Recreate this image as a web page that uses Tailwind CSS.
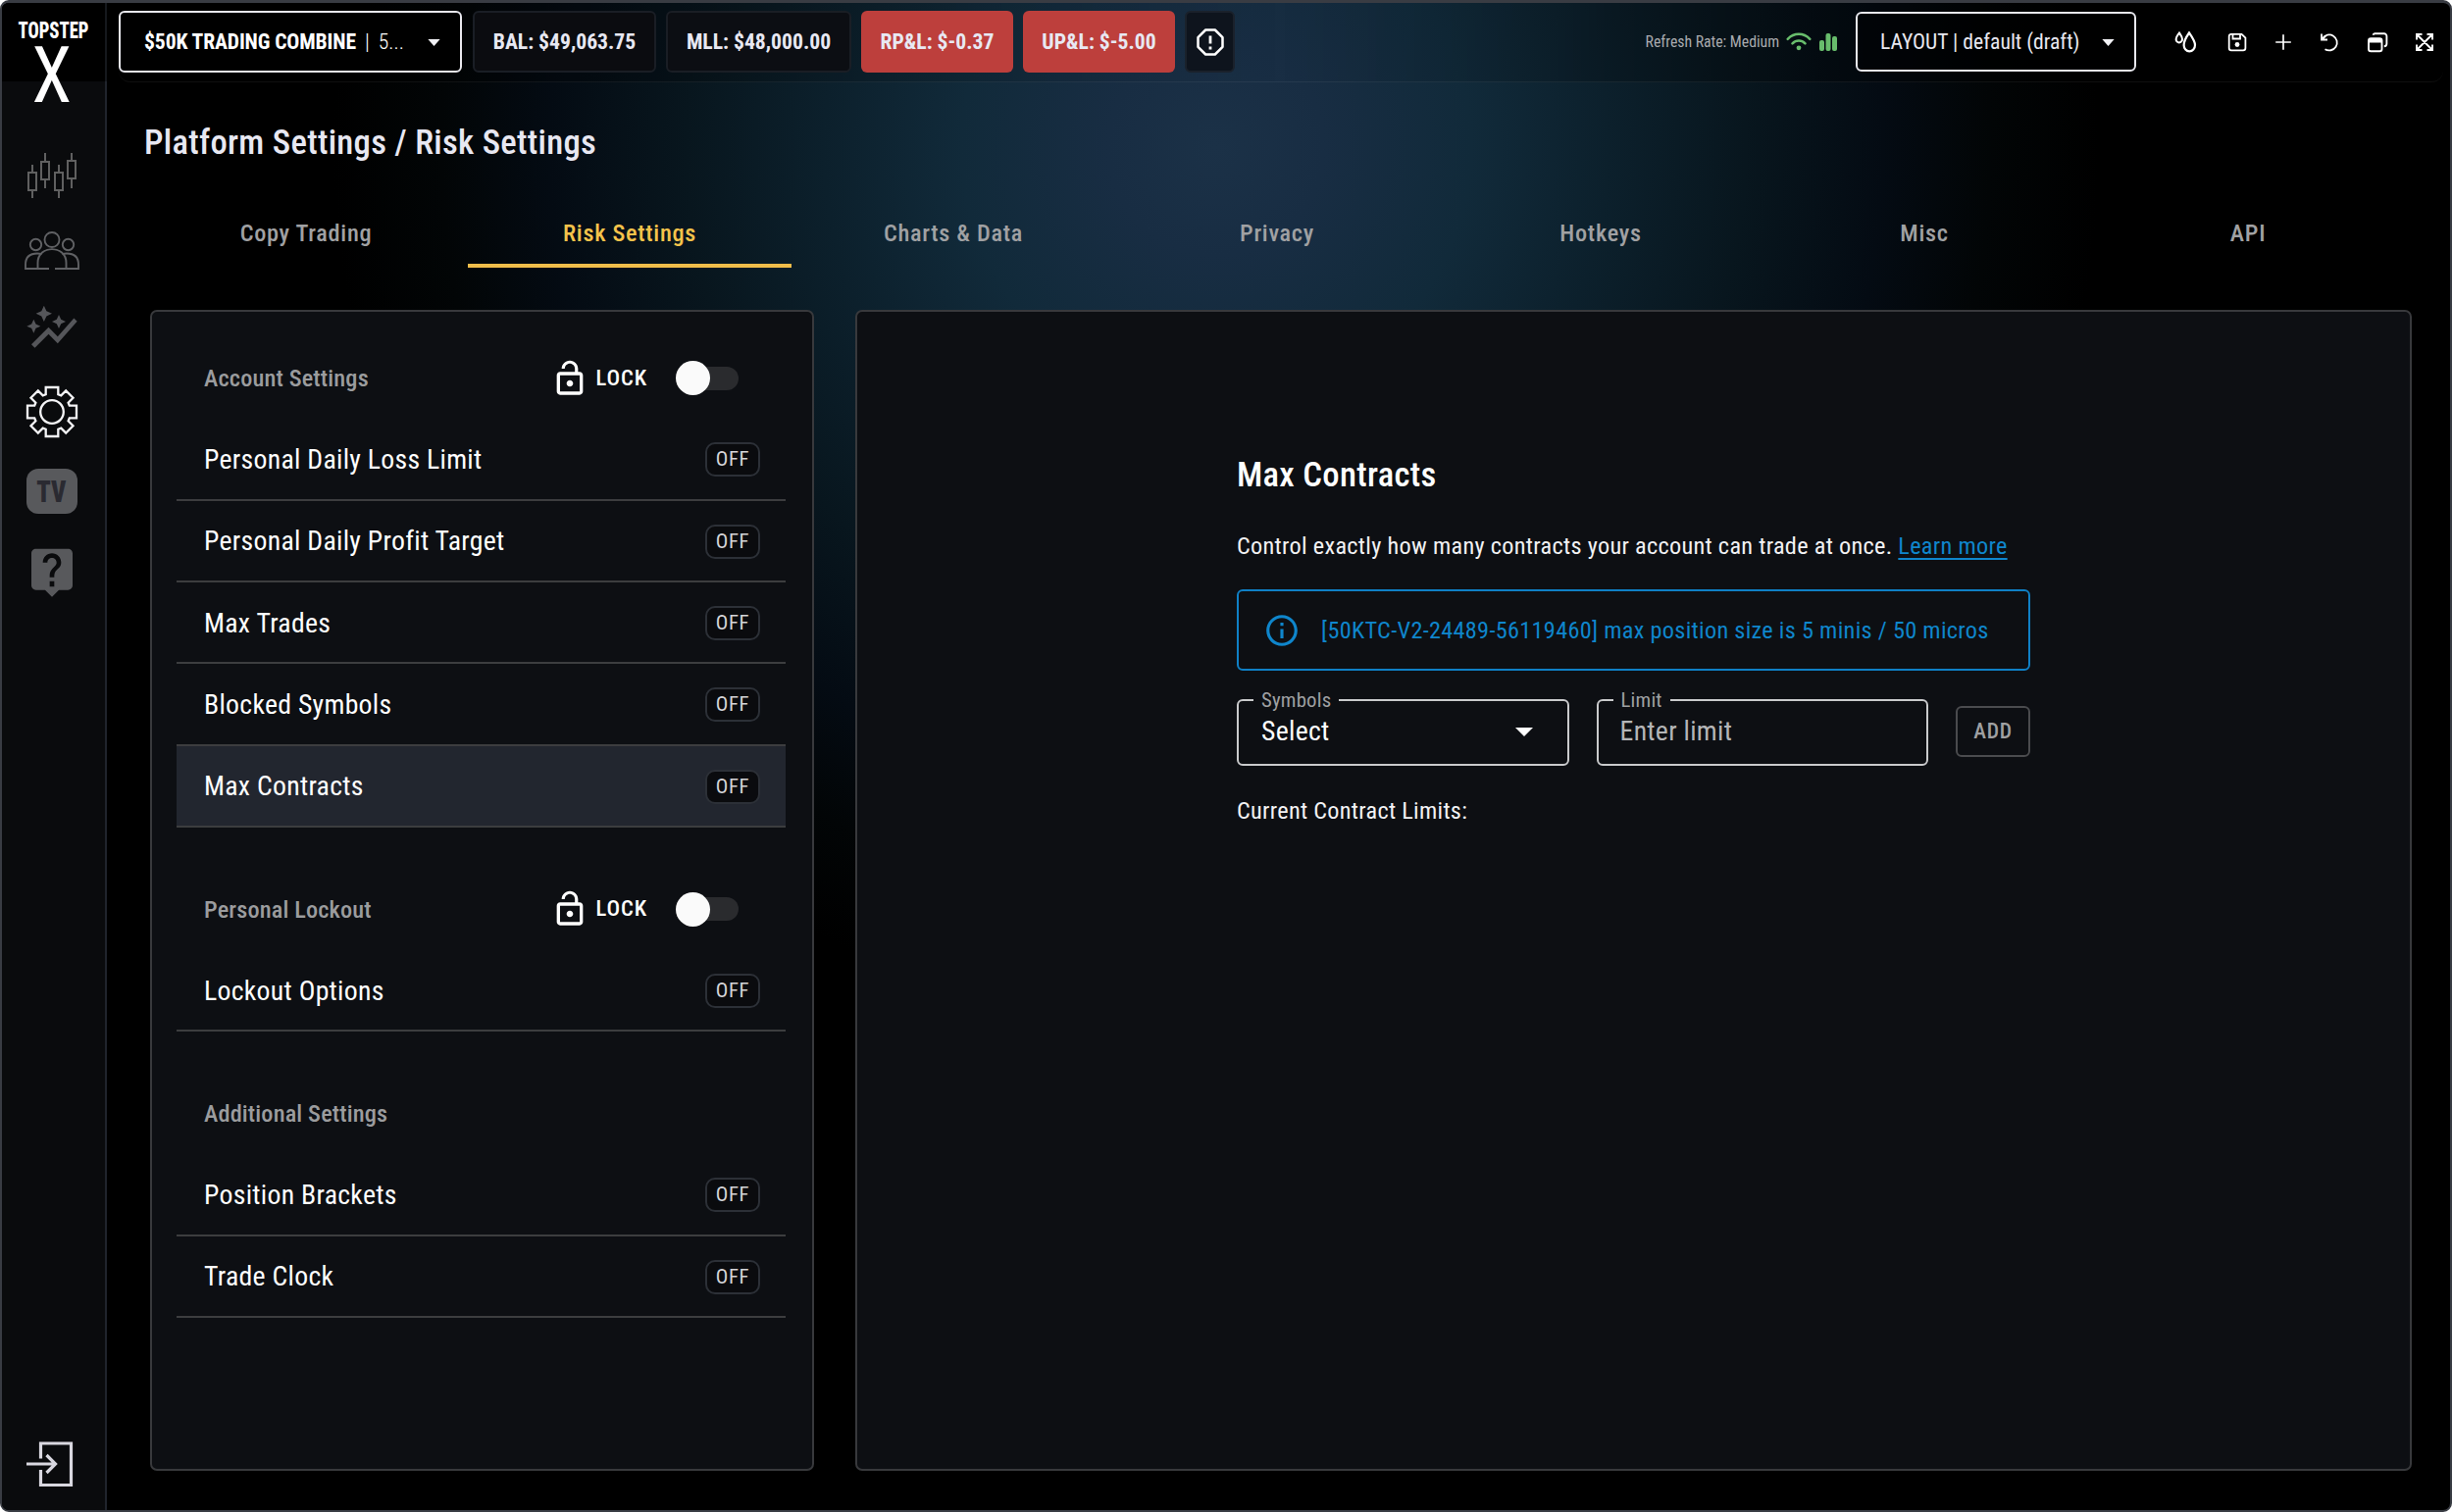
<!DOCTYPE html>
<html lang="en">
<head>
  <meta charset="UTF-8">
  <title>TopstepX - Risk Settings</title>
  <script src="https://cdn.jsdelivr.net/npm/@tailwindcss/browser@4"></script>
</head>
<body class="bg-white font-['Roboto_Condensed','Roboto',sans-serif] text-white">
  <div class="flex w-[2500px] h-[1542px] overflow-hidden rounded-[9px] border-2 border-t-[3px] border-[#393c43] bg-black bg-[radial-gradient(circle_900px_at_1238px_147px,#1b3147_0px,#182d43_110px,#112a3a_260px,#0c202c_400px,#08161e_540px,#040b13_680px,#020506_790px,#000_900px)]">

    <!-- Sidebar -->
    <aside class="flex flex-col items-center w-[107px] shrink-0 pr-1 bg-[#0a0b0d] border-r-2 border-[#20242c]">
      <div class="flex flex-col items-center w-[107px] h-20 shrink-0 -mr-1.5 bg-black border-r-2 border-[#15181d]">
        <span class="mt-[16px] text-[23px] leading-[25px] font-extrabold scale-x-[0.81]">TOPSTEP</span>
        <span class="mt-[4px] mr-[3px] text-[79px] leading-[58px] font-normal scale-x-[0.93]">X</span>
      </div>

      <svg class="mt-[73px] w-[54px] h-[46px] shrink-0" viewBox="0 0 54 46" fill="none" stroke="#606060" stroke-width="2">
        <path d="M3 20h8v18H3zM7 12v8M7 38v8M16 9h8v18h-8zM20 0v9M20 27v9M30 20h8v18h-8zM34 12v8M34 38v8M43 8h8v18h-8zM47 0v8M47 26v10"/>
      </svg>

      <svg class="mt-[34px] w-[58px] h-[40px] shrink-0" viewBox="0 0 58 40" fill="none" stroke="#606164" stroke-width="1.9">
        <circle cx="29" cy="8.5" r="7.5"/>
        <circle cx="12.500" cy="13.500" r="5.700"/>
        <circle cx="45.500" cy="13.500" r="5.700"/>
        <path d="M26 38H14.500V32C14.500 13.500 43.500 13.500 43.500 32V38H32"/>
        <path d="M14.500 38H2V34C2 26 7 22.500 14 22.500c2 0 3.500.3 4.500.8M43.500 38H56V34C56 26 51 22.500 44 22.500c-2 0-3.500.3-4.500.8"/>
      </svg>

      <svg class="mt-[31px] w-14 h-14 shrink-0" viewBox="0 0 24 24" fill="#55565a">
        <path d="M14.060 9.940 12 9l2.060-.94L15 6l.94 2.060L18 9l-2.060.94L15 12zM4 14l.94-2.060L7 11l-2.060-.94L4 8l-.94 2.060L1 11l2.060.94zm4.500-5 1.090-2.410L12 5.500 9.590 4.410 8.500 2 7.410 4.410 5 5.500l2.410 1.090zm-4 11.500 6-6.010 4 4L23 8.930l-1.410-1.410-7.090 7.970-4-4L3 19z"/>
      </svg>

      <svg class="mt-[30px] w-[54px] h-[54px] shrink-0" viewBox="-27 -27 54 54" fill="none" stroke="#f4f4f6" stroke-width="2.300">
        <circle r="11.800"/>
        <path d="M-6.300-25H6.300V-17.800L9.300-16.600L14.200-21.500L21.500-14.200L16.600-9.300L17.800-6.300H25V6.300H17.800L16.600 9.300L21.500 14.200L14.200 21.500L9.300 16.600L6.300 17.800V25H-6.300V17.800L-9.300 16.600L-14.200 21.500L-21.500 14.200L-16.600 9.300L-17.800 6.300H-25V-6.300H-17.800L-16.600-9.300L-21.500-14.200L-14.200-21.500L-9.300-16.600L-6.300-17.800Z"/>
      </svg>

      <div class="mt-[31px] flex items-center justify-center w-[52px] h-[46px] shrink-0 rounded-[12px] bg-[#58595c] text-[#2a2a31] text-[32px] leading-none font-black">
        <span class="scale-x-[0.82]">TV</span>
      </div>

      <svg class="mt-[31px] w-14 h-14 shrink-0" viewBox="0 0 24 24" fill="#58595c">
        <path d="M19 2H5c-1.110 0-2 .9-2 2v14c0 1.100.89 2 2 2h4l3 3 3-3h4c1.100 0 2-.9 2-2V4c0-1.100-.9-2-2-2zm-6 16.500h-2v-2.300h2v2.300zm2.070-8.250-.9.920C13.450 11.900 13 12.500 13 14.500h-2v-1c0-1.100.45-2.100 1.170-2.830l1.240-1.260c.37-.36.59-.86.59-1.410 0-1.100-.9-2-2-2s-2 .9-2 2H8c0-2.210 1.790-4 4-4s4 1.790 4 4c0 .88-.36 1.680-.93 2.250z"/>
      </svg>

      <svg class="mt-auto mb-[23px] mr-[6px] w-[50px] h-[48px] shrink-0" viewBox="0 0 50 48" fill="none" stroke="#d9d8e0" stroke-width="3.200">
        <path d="M16.500 18.500V3H47.500V45.500H16.500V30"/>
        <path d="M2 24H31M22.500 15L31.500 24L22.500 33"/>
      </svg>
    </aside>

    <main class="flex-1 min-w-0">
      <!-- Top bar -->
      <header class="flex items-start ml-[12px] mr-[7px] h-[81px] pt-2 rounded-b-[12px] border-b border-white/6 bg-linear-to-r from-black/40 via-black/0 to-black/60">
        <div class="flex items-center w-[350px] h-[63px] pl-6 pt-0.5 rounded-md border-2 border-[#e8e8ee] bg-black text-[21.67px]">
          <span class="font-bold tracking-[-0.13px]">$50K TRADING COMBINE</span>
          <span class="ml-[9px] font-light">|</span>
          <span class="ml-[9px] font-light">5...</span>
          <svg class="ml-auto mr-[20px] w-[13px] h-[7px]" viewBox="0 0 14 8" fill="#f2f2f6"><path d="M0 0h14L7 8z"/></svg>
        </div>
        <div class="flex items-center justify-center ml-[11px] w-[187px] h-[63px] pt-0.5 rounded-md border-2 border-[#1a1e25] bg-[#0b0c10] text-[21.67px] font-bold text-[#e8e8f2]">BAL: $49,063.75</div>
        <div class="flex items-center justify-center ml-[10px] w-[189px] h-[63px] pt-0.5 rounded-md border-2 border-[#1a1e25] bg-[#0c0e13] text-[21.67px] font-bold text-[#e8e8f2]">MLL: $48,000.00</div>
        <div class="flex items-center justify-center ml-[10px] w-[155px] h-[63px] pt-0.5 rounded-md bg-[#bd3f3c] text-[21.67px] font-bold text-[#e8e8f2]">RP&amp;L: $-0.37</div>
        <div class="flex items-center justify-center ml-[10px] w-[155px] h-[63px] pt-0.5 rounded-md bg-[#bd3f3c] text-[21.67px] font-bold text-[#e8e8f2]">UP&amp;L: $-5.00</div>
        <div class="flex items-center justify-center ml-[10px] w-[51px] h-[63px] rounded-md border-2 border-[#1a212b] bg-[#0e141d]">
          <svg class="w-[30px] h-[30px]" viewBox="0 0 30 30" fill="none" stroke="#fff" stroke-width="2.500">
            <path d="M10.200 2.500h9.600l7.700 7.700v9.600l-7.700 7.700h-9.600l-7.700-7.700v-9.600z" stroke-linejoin="round"/>
            <path d="M15 8.500v8M15 19.500v3" stroke-width="2.800"/>
          </svg>
        </div>

        <div class="flex items-center ml-auto h-[63px]">
          <span class="text-[15.8px] tracking-[-0.03px] text-[#a9abaf]">Refresh Rate: Medium</span>
          <svg class="ml-[7px] w-[26px] h-[19px]" viewBox="0 0 26 19" fill="none" stroke="#68bd6c" stroke-width="2.500" stroke-linecap="round">
            <path d="M1.700 6.800C8.200.1 17.800.1 24.300 6.800M6.500 11.300C10.200 7.500 15.800 7.500 19.500 11.300"/>
            <circle cx="13" cy="15.800" r="2.400" fill="#68bd6c" stroke="none"/>
          </svg>
          <svg class="ml-[8px] w-[18px] h-[18px]" viewBox="0 0 18 18" fill="#68bd6c">
            <rect x="0" y="7" width="5" height="11" rx="2"/>
            <rect x="6.500" y="0" width="5" height="18" rx="2"/>
            <rect x="13" y="3" width="5" height="15" rx="2"/>
          </svg>
        </div>

        <div class="flex items-center ml-[19px] mt-px w-[286px] h-[61px] pl-[23px] pt-px rounded-md border-2 border-[#e8e8ee] bg-black/40 text-[21.67px] text-[#e8e8f0]">
          <span>LAYOUT | default (draft)</span>
          <svg class="ml-auto mr-[20px] w-[13px] h-[7px]" viewBox="0 0 14 8" fill="#f2f2f6"><path d="M0 0h14L7 8z"/></svg>
        </div>

        <div class="flex items-center h-[63px] ml-[38px] mr-[7px] gap-[23px]">
          <svg class="mr-1.5 w-6 h-6" viewBox="0 0 24 24" fill="none" stroke="#fff" stroke-width="2.200">
            <path d="M16 2.500C13.200 6.500 10.600 10.800 10.600 15a5.700 6.300 0 0 0 11.400 0C22 10.800 18.800 6.500 16 2.500z"/>
            <path d="M6 2.500C4.400 4.700 2.600 6.500 2.600 9a3.200 3.400 0 0 0 6.400 0C9 6.500 7.600 4.700 6 2.500z" stroke-width="2"/>
          </svg>
          <svg class="w-6 h-6" viewBox="0 0 24 24" fill="none" stroke="#fff" stroke-width="1.800">
            <path d="M6 3.800h10.500l3.900 3.900V18a2.300 2.300 0 0 1-2.300 2.300H6A2.300 2.300 0 0 1 3.700 18V6A2.300 2.300 0 0 1 6 3.800zM7.500 4v4.500h7.500V4"/>
            <circle cx="12" cy="14.500" r="2.400" fill="#fff" stroke="none"/>
          </svg>
          <svg class="w-6 h-6" viewBox="0 0 24 24" stroke="#fff" stroke-width="1.700"><path d="M12 4.200v15.600M4.200 12h15.600"/></svg>
          <svg class="mr-0.5 w-6 h-6" viewBox="0 0 24 24" fill="none" stroke="#fff" stroke-width="1.800">
            <path d="M7.500 19.200A8 8 0 1 0 5 8.200M4 3.500v6h6M4 9.500l4.500-4"/>
          </svg>
          <svg class="mr-px w-6 h-6" viewBox="0 0 24 24" fill="none" stroke="#fff" stroke-width="1.900">
            <path d="M7.500 4.800a2 2 0 0 1 1.700-1.500h9.600A2.600 2.600 0 0 1 21.400 6v7.500a2.800 2.800 0 0 1-2.600 2.800"/>
            <rect x="3" y="8.300" width="13.500" height="13" rx="2.300"/>
            <path d="M3 10.500h13.500" stroke-width="4"/>
          </svg>
          <svg class="w-6 h-6" viewBox="0 0 24 24" fill="none" stroke="#fff" stroke-width="1.900">
            <path d="M4 9.500V4h5.500M14.500 4H20v5.500M20 14.500V20h-5.500M9.500 20H4v-5.500M4.500 4.500l15 15M19.500 4.500l-15 15"/>
          </svg>
        </div>
      </header>

      <h1 class="mt-[41px] ml-[38px] text-[34.7px] leading-10 font-medium tracking-[0.28px] text-[#e8e8f2]">Platform Settings / Risk Settings</h1>

      <!-- Tabs -->
      <nav class="grid grid-cols-7 mt-[35px] ml-[38px] w-[2310px] h-[73px] text-[24.3px] font-medium tracking-[0.7px] text-[#a0a1a3] text-center leading-[75px]">
        <a>Copy Trading</a>
        <a class="text-[#f5c34b] border-b-4 border-[#f0bd4a] h-[73px]">Risk Settings</a>
        <a>Charts &amp; Data</a>
        <a>Privacy</a>
        <a>Hotkeys</a>
        <a>Misc</a>
        <a>API</a>
      </nav>

      <div class="flex gap-[42px] mt-[43px] ml-[44px]">
        <!-- Settings list -->
        <section class="w-[677px] h-[1184px] pl-[25px] pr-[27px] pt-[26px] rounded-[7px] border-2 border-[#38393c] bg-[#0d0f13]">
          <div class="flex items-center h-[83.33px] pl-7 pr-12">
            <h2 class="pt-0.5 text-[24.3px] font-medium tracking-[0.15px] text-[#9b9c9e]">Account Settings</h2>
            <svg class="ml-auto w-10 h-10" viewBox="0 0 24 24" fill="#fff"><path d="M12 17c1.100 0 2-.9 2-2s-.9-2-2-2-2 .9-2 2 .9 2 2 2m6-9h-1V6c0-2.760-2.240-5-5-5S7 3.240 7 6h1.900c0-1.710 1.390-3.100 3.100-3.100s3.100 1.390 3.100 3.100v2H6c-1.100 0-2 .9-2 2v10c0 1.100.9 2 2 2h12c1.100 0 2-.9 2-2V10c0-1.100-.9-2-2-2m0 12H6V10h12z"/></svg>
            <span class="ml-[7px] mr-[35px] text-[22.57px] font-medium tracking-[0.9px]">LOCK</span>
            <span class="flex items-center w-[58px] h-6 rounded-full bg-[#2a2b2e]"><i class="block w-[35px] h-[35px] rounded-full bg-[#fafafa] -ml-[6px]"></i></span>
          </div>
          <div class="flex items-center justify-between h-[83.33px] pt-0.5 pl-7 pr-[26px] border-b-2 border-[#3c3d3f]">
            <span class="text-[27.78px] tracking-[0.28px]">Personal Daily Loss Limit</span>
            <span class="flex items-center justify-center w-14 h-[35px] rounded-[10px] border-2 border-[#2c3037] bg-[#0a0b0e] text-[20.8px] tracking-[0.6px] text-[#d5d5d8]">OFF</span>
          </div>
          <div class="flex items-center justify-between h-[83.33px] pt-0.5 pl-7 pr-[26px] border-b-2 border-[#3c3d3f]">
            <span class="text-[27.78px] tracking-[0.28px]">Personal Daily Profit Target</span>
            <span class="flex items-center justify-center w-14 h-[35px] rounded-[10px] border-2 border-[#2c3037] bg-[#0a0b0e] text-[20.8px] tracking-[0.6px] text-[#d5d5d8]">OFF</span>
          </div>
          <div class="flex items-center justify-between h-[83.33px] pt-0.5 pl-7 pr-[26px] border-b-2 border-[#3c3d3f]">
            <span class="text-[27.78px] tracking-[0.28px]">Max Trades</span>
            <span class="flex items-center justify-center w-14 h-[35px] rounded-[10px] border-2 border-[#2c3037] bg-[#0a0b0e] text-[20.8px] tracking-[0.6px] text-[#d5d5d8]">OFF</span>
          </div>
          <div class="flex items-center justify-between h-[83.33px] pt-0.5 pl-7 pr-[26px] border-b-2 border-[#3c3d3f]">
            <span class="text-[27.78px] tracking-[0.28px]">Blocked Symbols</span>
            <span class="flex items-center justify-center w-14 h-[35px] rounded-[10px] border-2 border-[#2c3037] bg-[#0a0b0e] text-[20.8px] tracking-[0.6px] text-[#d5d5d8]">OFF</span>
          </div>
          <div class="flex items-center justify-between h-[83.33px] pt-0.5 pl-7 pr-[26px] border-b-2 border-[#3c3d3f] bg-[#22262f]">
            <span class="text-[27.78px] tracking-[0.28px]">Max Contracts</span>
            <span class="flex items-center justify-center w-14 h-[35px] rounded-[10px] border-2 border-[#2c3037] bg-[#0a0b0e] text-[20.8px] tracking-[0.6px] text-[#d5d5d8]">OFF</span>
          </div>

          <div class="flex items-center mt-[41.67px] h-[83.33px] pl-7 pr-12">
            <h2 class="pt-0.5 text-[24.3px] font-medium tracking-[0.15px] text-[#9b9c9e]">Personal Lockout</h2>
            <svg class="ml-auto w-10 h-10" viewBox="0 0 24 24" fill="#fff"><path d="M12 17c1.100 0 2-.9 2-2s-.9-2-2-2-2 .9-2 2 .9 2 2 2m6-9h-1V6c0-2.760-2.240-5-5-5S7 3.240 7 6h1.900c0-1.710 1.390-3.100 3.100-3.100s3.100 1.390 3.100 3.100v2H6c-1.100 0-2 .9-2 2v10c0 1.100.9 2 2 2h12c1.100 0 2-.9 2-2V10c0-1.100-.9-2-2-2m0 12H6V10h12z"/></svg>
            <span class="ml-[7px] mr-[35px] text-[22.57px] font-medium tracking-[0.9px]">LOCK</span>
            <span class="flex items-center w-[58px] h-6 rounded-full bg-[#2a2b2e]"><i class="block w-[35px] h-[35px] rounded-full bg-[#fafafa] -ml-[6px]"></i></span>
          </div>
          <div class="flex items-center justify-between h-[83.33px] pt-0.5 pl-7 pr-[26px] border-b-2 border-[#3c3d3f]">
            <span class="text-[27.78px] tracking-[0.28px]">Lockout Options</span>
            <span class="flex items-center justify-center w-14 h-[35px] rounded-[10px] border-2 border-[#2c3037] bg-[#0a0b0e] text-[20.8px] tracking-[0.6px] text-[#d5d5d8]">OFF</span>
          </div>

          <div class="flex items-center mt-[41.67px] h-[83.33px] pl-7">
            <h2 class="pt-0.5 text-[24.3px] font-medium tracking-[0.15px] text-[#9b9c9e]">Additional Settings</h2>
          </div>
          <div class="flex items-center justify-between h-[83.33px] pt-0.5 pl-7 pr-[26px] border-b-2 border-[#3c3d3f]">
            <span class="text-[27.78px] tracking-[0.28px]">Position Brackets</span>
            <span class="flex items-center justify-center w-14 h-[35px] rounded-[10px] border-2 border-[#2c3037] bg-[#0a0b0e] text-[20.8px] tracking-[0.6px] text-[#d5d5d8]">OFF</span>
          </div>
          <div class="flex items-center justify-between h-[83.33px] pt-0.5 pl-7 pr-[26px] border-b-2 border-[#3c3d3f]">
            <span class="text-[27.78px] tracking-[0.28px]">Trade Clock</span>
            <span class="flex items-center justify-center w-14 h-[35px] rounded-[10px] border-2 border-[#2c3037] bg-[#0a0b0e] text-[20.8px] tracking-[0.6px] text-[#d5d5d8]">OFF</span>
          </div>
        </section>

        <!-- Max contracts panel -->
        <section class="w-[1587px] h-[1184px] rounded-[7px] border-2 border-[#38393c] bg-[#0d0f13]">
          <div class="mt-[146px] ml-[387px] w-[809px]">
            <h2 class="text-[34.7px] leading-10 font-medium tracking-[0.28px]">Max Contracts</h2>
            <p class="mt-[35px] text-[24.3px] leading-9 tracking-[0.29px] text-[#f2f2f4] whitespace-nowrap">Control exactly how many contracts your account can trade at once. <a class="text-[#0f86cc] underline decoration-2 underline-offset-4">Learn more</a></p>

            <div class="flex items-center mt-[26px] h-[83px] pl-[25px] rounded-md border-2 border-[#0f80c6] text-[#0f86cc]">
              <svg class="w-[38px] h-[38px]" viewBox="0 0 24 24" fill="currentColor"><path d="M11 7h2v2h-2zm0 4h2v6h-2zm1-9C6.480 2 2 6.480 2 12s4.480 10 10 10 10-4.480 10-10S17.520 2 12 2m0 18c-4.410 0-8-3.590-8-8s3.590-8 8-8 8 3.590 8 8-3.590 8-8 8"/></svg>
              <span class="ml-[21px] pt-px text-[24.3px] tracking-[0.29px] whitespace-nowrap">[50KTC-V2-24489-56119460] max position size is 5 minis / 50 micros</span>
            </div>

            <div class="flex items-start gap-7 mt-[18px]">
              <fieldset class="w-[339px] h-[82px] -mt-[3px] px-[15px] rounded-md border-2 border-[#c9cacc]">
                <legend class="px-[8px] text-[20.8px] leading-[30px] tracking-[0.18px] text-[#9fa0a2]">Symbols</legend>
                <div class="flex items-center justify-between pl-2 pr-[20px] h-[34px] text-[27.78px] tracking-[0.28px]">
                  <span>Select</span>
                  <svg class="w-[18px] h-[9px]" viewBox="0 0 18 9" fill="#fff"><path d="M0 0h18L9 9z"/></svg>
                </div>
              </fieldset>
              <fieldset class="w-[339px] h-[82px] -mt-[3px] px-[15px] rounded-md border-2 border-[#c9cacc]">
                <legend class="px-[8px] text-[20.8px] leading-[30px] tracking-[0.18px] text-[#9fa0a2]">Limit</legend>
                <div class="flex items-center pl-[7px] h-[34px] text-[27.78px] tracking-[0.28px] text-[#b4b5b7]">Enter limit</div>
              </fieldset>
              <button class="flex items-center justify-center mt-[18px] w-[76px] h-[52px] rounded-md border-2 border-[#4a4b4e] text-[21.67px] font-medium tracking-[0.7px] text-[#9fa0a2]">ADD</button>
            </div>

            <p class="mt-[28px] text-[24.3px] leading-9 tracking-[0.28px] text-[#f2f2f4]">Current Contract Limits:</p>
          </div>
        </section>
      </div>
    </main>
  </div>
</body>
</html>
